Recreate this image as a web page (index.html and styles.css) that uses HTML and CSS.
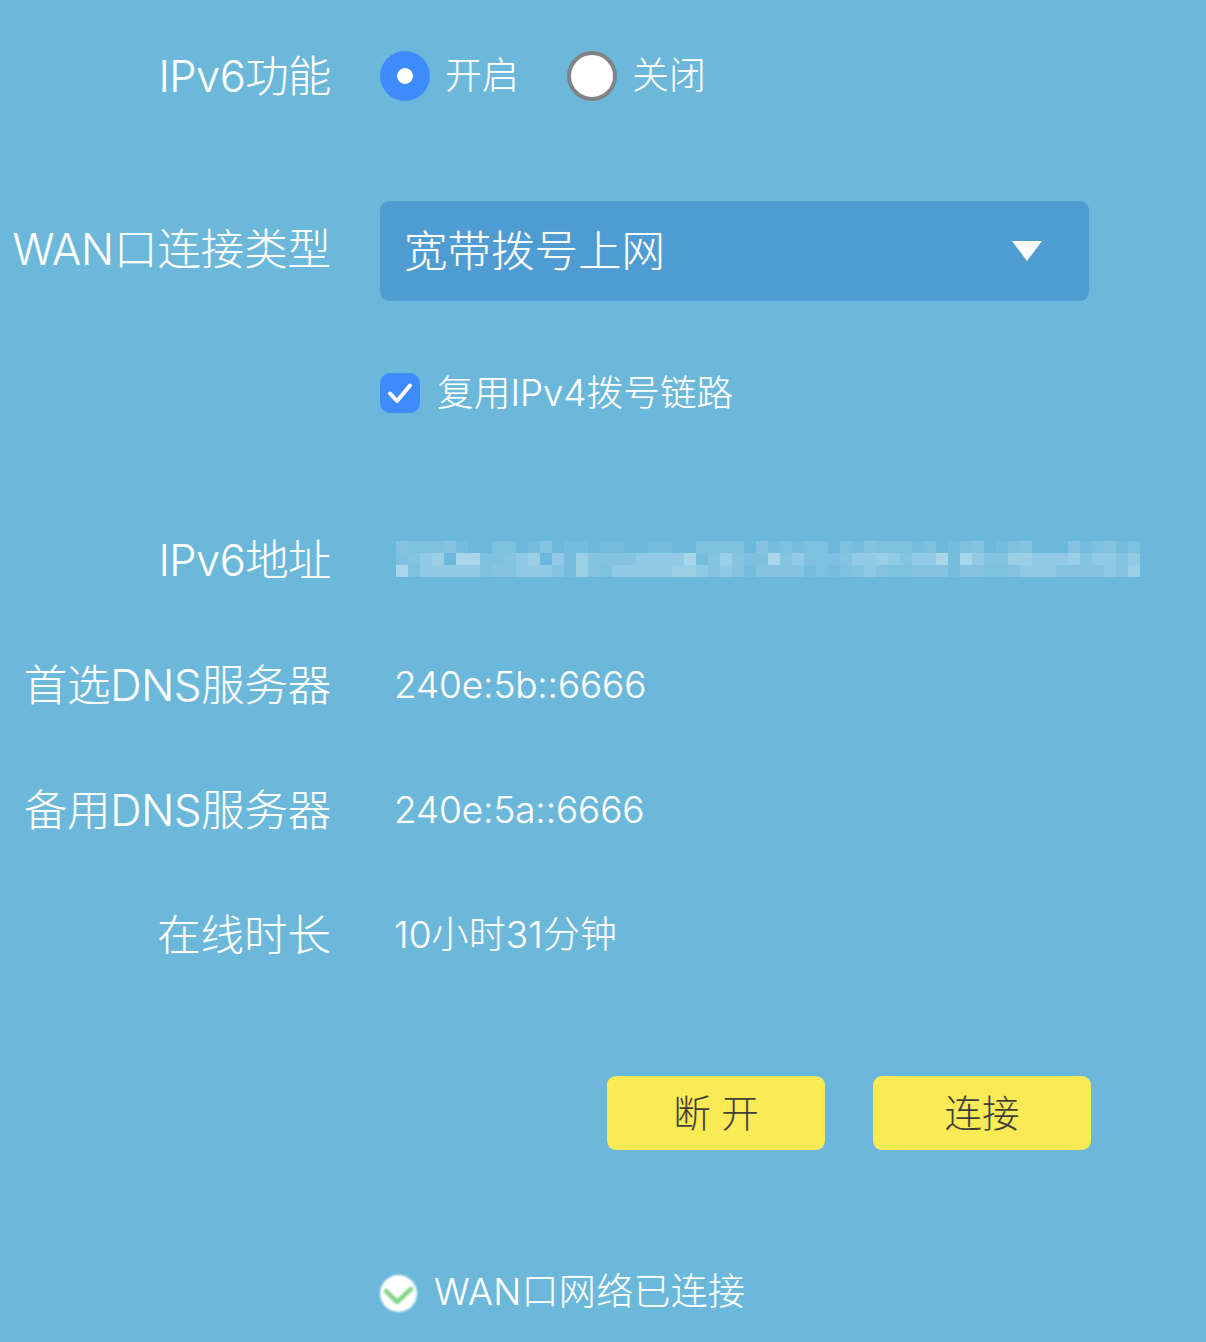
FILE: index.html
```html
<!DOCTYPE html>
<html lang="zh-CN">
<head>
<meta charset="utf-8">
<title>IPv6</title>
<link rel="stylesheet" href="styles.css">
</head>
<body>
<main class="form">
  <div class="row row-radio">
    <div class="label label-v6">IPv6功能</div>
    <div class="radios">
      <span class="radio radio-on"></span><span class="opt">开启</span>
      <span class="radio radio-off"></span><span class="opt">关闭</span>
    </div>
  </div>
  <div class="row row-select">
    <div class="label label-up">WAN口连接类型</div>
    <div class="select">
      <span class="select-text">宽带拨号上网</span>
      <svg class="arrow" viewBox="0 0 30 20" width="30" height="20"><path d="M0 0H30L15 20Z" fill="#fff"/></svg>
    </div>
  </div>
  <div class="row row-check">
    <div></div>
    <div class="check-line">
      <span class="check"><svg viewBox="0 0 40 40" width="40" height="40"><path d="M10 20.5L17 28L30 12.5" fill="none" stroke="#fff" stroke-width="4" stroke-linecap="round" stroke-linejoin="round"/></svg></span>
      <span class="opt">复用IPv4拨号链路</span>
    </div>
  </div>
  <div class="row row-first">
    <div class="label label-v6">IPv6地址</div>
    <div class="blur">
      <i class="b3"></i><i class="b2"></i><i class="b2"></i><i class="b2"></i><i class="b3"></i><i class="b1"></i><i class="b0"></i><i class="b0"></i><i class="b2"></i><i class="b2"></i><i class="b0"></i><i class="b1"></i><i class="b3"></i><i class="b0"></i><i class="b1"></i><i class="b1"></i><i class="b0"></i><i class="b1"></i><i class="b1"></i><i class="b0"></i><i class="b0"></i><i class="b1"></i><i class="b1"></i><i class="b0"></i><i class="b0"></i><i class="b2"></i><i class="b2"></i><i class="b2"></i><i class="b2"></i><i class="b0"></i><i class="b3"></i><i class="b1"></i><i class="b2"></i><i class="b1"></i><i class="b2"></i><i class="b2"></i><i class="b0"></i><i class="b2"></i><i class="b1"></i><i class="b3"></i><i class="b2"></i><i class="b2"></i><i class="b2"></i><i class="b1"></i><i class="b2"></i><i class="b0"></i><i class="b1"></i><i class="b2"></i><i class="b3"></i><i class="b0"></i><i class="b1"></i><i class="b2"></i><i class="b3"></i><i class="b0"></i><i class="b0"></i><i class="b0"></i><i class="b3"></i><i class="b1"></i><i class="b2"></i><i class="b3"></i><i class="b1"></i><i class="b2"></i>
      <i class="b2"></i><i class="b3"></i><i class="b4"></i><i class="b5"></i><i class="b0"></i><i class="b6"></i><i class="b6"></i><i class="b2"></i><i class="b2"></i><i class="b3"></i><i class="b4"></i><i class="b5"></i><i class="b0"></i><i class="b4"></i><i class="b1"></i><i class="b5"></i><i class="b3"></i><i class="b3"></i><i class="b3"></i><i class="b3"></i><i class="b4"></i><i class="b4"></i><i class="b4"></i><i class="b4"></i><i class="b6"></i><i class="b1"></i><i class="b3"></i><i class="b5"></i><i class="b3"></i><i class="b2"></i><i class="b2"></i><i class="b6"></i><i class="b3"></i><i class="b4"></i><i class="b2"></i><i class="b2"></i><i class="b2"></i><i class="b3"></i><i class="b4"></i><i class="b4"></i><i class="b5"></i><i class="b4"></i><i class="b3"></i><i class="b4"></i><i class="b4"></i><i class="b6"></i><i class="b1"></i><i class="b6"></i><i class="b4"></i><i class="b3"></i><i class="b3"></i><i class="b5"></i><i class="b5"></i><i class="b4"></i><i class="b4"></i><i class="b4"></i><i class="b5"></i><i class="b3"></i><i class="b4"></i><i class="b4"></i><i class="b3"></i><i class="b4"></i>
      <i class="b6"></i><i class="b2"></i><i class="b4"></i><i class="b4"></i><i class="b4"></i><i class="b4"></i><i class="b4"></i><i class="b2"></i><i class="b3"></i><i class="b3"></i><i class="b4"></i><i class="b4"></i><i class="b4"></i><i class="b3"></i><i class="b1"></i><i class="b5"></i><i class="b3"></i><i class="b2"></i><i class="b4"></i><i class="b4"></i><i class="b4"></i><i class="b4"></i><i class="b4"></i><i class="b5"></i><i class="b5"></i><i class="b4"></i><i class="b3"></i><i class="b4"></i><i class="b3"></i><i class="b1"></i><i class="b3"></i><i class="b3"></i><i class="b3"></i><i class="b3"></i><i class="b1"></i><i class="b2"></i><i class="b1"></i><i class="b2"></i><i class="b3"></i><i class="b4"></i><i class="b3"></i><i class="b2"></i><i class="b2"></i><i class="b3"></i><i class="b3"></i><i class="b3"></i><i class="b1"></i><i class="b3"></i><i class="b3"></i><i class="b2"></i><i class="b2"></i><i class="b3"></i><i class="b4"></i><i class="b4"></i><i class="b4"></i><i class="b3"></i><i class="b3"></i><i class="b3"></i><i class="b3"></i><i class="b4"></i><i class="b3"></i><i class="b5"></i>
    </div>
  </div>
  <div class="row row-info">
    <div class="label label-dns">首选DNS服务器</div>
    <div class="value">240e:5b::6666</div>
  </div>
  <div class="row row-info">
    <div class="label label-dns">备用DNS服务器</div>
    <div class="value">240e:5a::6666</div>
  </div>
  <div class="row row-info">
    <div class="label">在线时长</div>
    <div class="value value-time">10小时31分钟</div>
  </div>
  <div class="buttons">
    <button class="btn" type="button">断 开</button>
    <button class="btn" type="button">连接</button>
  </div>
  <div class="row row-status">
    <div></div>
    <div class="status">
      <span class="ok"><svg viewBox="0 0 38 38" width="38" height="38"><path d="M6 16L17 27L31 14" fill="none" stroke="#7fd681" stroke-width="4.5" stroke-linecap="round" stroke-linejoin="round"/></svg></span>
      <span class="opt">WAN口网络已连接</span>
    </div>
  </div>
</main>
</body>
</html>
```
FILE: styles.css
```css
* { box-sizing: border-box; }
html, body { margin: 0; padding: 0; }
body {
  width: 1206px;
  height: 1342px;
  overflow: hidden;
  background: #6bb8db;
  color: #fff;
  font-family: "Inter", "Noto Sans CJK SC", sans-serif;
  font-weight: 300;
  text-shadow: 0 0 1px rgba(255, 255, 255, 0.35);
}
.form { padding-top: 51px; }
.row {
  display: grid;
  grid-template-columns: 331px 1fr;
  column-gap: 49px;
  align-items: center;
}
.label { font-size: 43.5px; text-align: right; white-space: nowrap; line-height: 50px; }
.label-v6 { letter-spacing: -0.6px; }
.label-dns { letter-spacing: -0.25px; }
.label-up { position: relative; top: -2px; letter-spacing: -0.1px; }
.row-radio { height: 50px; }
.row-select { height: 100px; margin-top: 100px; }
.row-check { height: 40px; margin-top: 72px; }
.row-first { height: 50px; margin-top: 122px; }
.row-info { height: 50px; margin-top: 75px; }
.row-status { height: 40px; margin-top: 122px; }
.radios { display: flex; align-items: center; }
.radio { width: 50px; height: 50px; border-radius: 50%; display: block; flex: none; }
.radio-on { background: radial-gradient(circle, #fff 0 7.5px, #3d8bfd 8.2px); }
.radio-off { background: #fff; border: 4px solid #7f8488; margin-left: 48px; }
.opt { font-size: 37px; line-height: 40px; margin-left: 15px; white-space: nowrap; }
.select {
  width: 709px;
  height: 100px;
  background: #4f9cd3;
  border-radius: 9px;
  display: flex;
  align-items: center;
  justify-content: space-between;
  padding: 0 47px 0 24px;
  font-size: 43.5px;
}
.select-text { position: relative; top: -3px; }
.arrow { display: block; }
.check-line, .status { display: flex; align-items: center; }
.check-line .opt { margin-left: 17px; font-size: 36.7px; }
.check { width: 40px; height: 40px; border-radius: 10px; background: #3d8bfd; display: block; flex: none; }
.check svg, .ok svg { display: block; }
.blur {
  display: grid;
  grid-template-columns: repeat(62, 12px);
  grid-auto-rows: 12px;
  margin: -3px 0 0 16px;
  width: 744px;
}
.blur i { display: block; }
.b0 { background: rgba(255, 255, 255, 0.01); }
.b1 { background: rgba(255, 255, 255, 0.07); }
.b2 { background: rgba(255, 255, 255, 0.12); }
.b3 { background: rgba(255, 255, 255, 0.18); }
.b4 { background: rgba(255, 255, 255, 0.25); }
.b5 { background: rgba(255, 255, 255, 0.32); }
.b6 { background: rgba(255, 255, 255, 0.42); }
.value { font-size: 37px; line-height: 50px; margin-left: 14px; white-space: nowrap; letter-spacing: -0.15px; }
.value-time { letter-spacing: 0.1px; }
.buttons {
  display: flex;
  gap: 48px;
  margin-top: 116px;
  padding-left: 607px;
}
.btn {
  width: 218px;
  height: 74px;
  border: 0;
  border-radius: 9px;
  background: #faea56;
  color: #3f3f35;
  font: 300 37.5px "Inter", "Noto Sans CJK SC", sans-serif;
  padding: 0 0 6px;
  text-shadow: none;
}
.ok {
  width: 37px;
  height: 37px;
  margin-top: 3px;
  border-radius: 50%;
  background: #fff;
  filter: blur(0.8px);
  display: block;
  flex: none;
}
.status .opt { margin-left: 17px; letter-spacing: 0.3px; margin-top: -1px; }
```
